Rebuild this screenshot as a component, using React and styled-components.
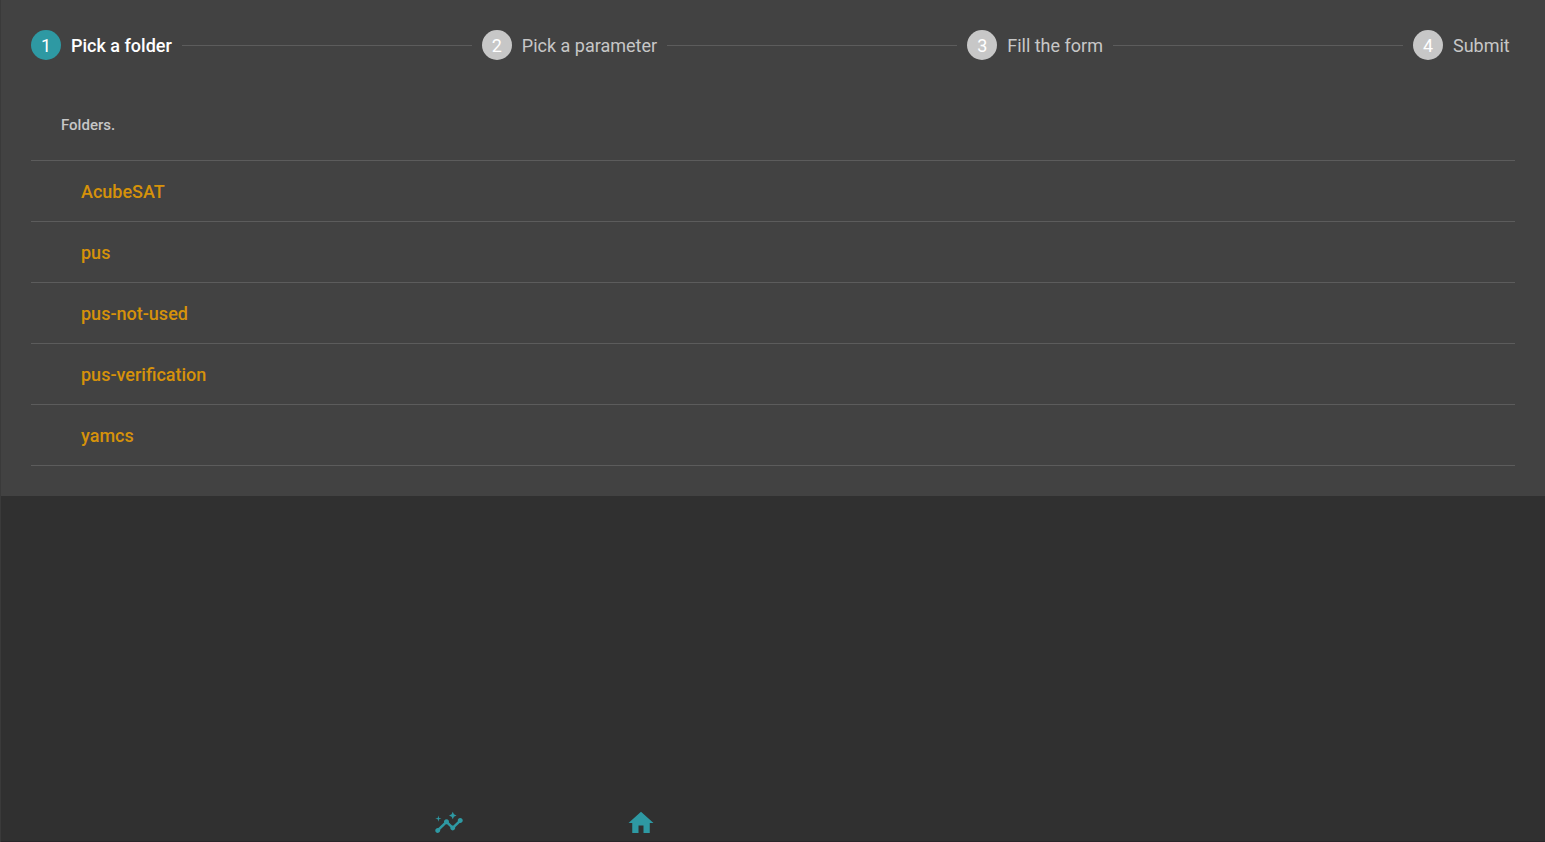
import React, { useState } from "react";
import styled, { createGlobalStyle } from "styled-components";
import { MdHome, MdInsights } from "react-icons/md";

const GlobalStyle = createGlobalStyle`
  *, *::before, *::after { box-sizing: border-box; }
  body {
    margin: 0;
    background: #303030;
    color: #c7c7c7;
    font-family: Roboto, "Liberation Sans", sans-serif;
  }
`;

const Page = styled.div`
  display: flex;
  flex-direction: column;
  min-height: 100vh;
  border-left: 1px solid #3a3a3a;
`;

const Card = styled.main`
  padding: 30px;
  background: #424242;
`;

const Stepper = styled.ol`
  display: flex;
  align-items: center;
  gap: 10px;
  margin: 0;
  padding: 0;
  list-style: none;
`;

const Step = styled.li`
  display: flex;
  align-items: center;
  gap: 10px;
  flex: ${({ $last }) => ($last ? "none" : "1 1 auto")};
  min-width: ${({ $last }) => ($last ? "102px" : "auto")};

  &:not(:last-child)::after {
    content: "";
    flex: 1;
    border-top: 1px solid #5c5c5c;
  }
`;

const StepNumber = styled.span`
  width: 30px;
  height: 30px;
  padding-top: 2px;
  border-radius: 50%;
  background: ${({ $active }) => ($active ? "#2e99a3" : "#c7c7c7")};
  color: #ffffff;
  font-size: 18px;
  line-height: 28px;
  text-align: center;
`;

const StepLabel = styled.span`
  padding-top: 2px;
  color: ${({ $active }) => ($active ? "#ffffff" : "#c7c7c7")};
  font-size: 18px;
  font-weight: ${({ $active }) => ($active ? 500 : 400)};
  line-height: 28px;
`;

const FolderTable = styled.table`
  width: 100%;
  margin-top: 30px;
  border-spacing: 0;
`;

const HeaderCell = styled.th`
  height: 71px;
  padding: 0 30px;
  border-bottom: 1px solid #5c5c5c;
  font-size: 15px;
  font-weight: 500;
  line-height: 20px;
  text-align: left;
`;

const FolderCell = styled.td`
  height: 61px;
  padding: 0 50px;
  border-bottom: 1px solid #5c5c5c;
`;

const FolderButton = styled.button`
  display: block;
  padding: 2px 0 0;
  border: 0;
  background: none;
  color: #d6920a;
  font: 500 18px/28px Roboto, "Liberation Sans", sans-serif;
  cursor: pointer;
`;

const BottomNav = styled.nav`
  display: flex;
  margin-top: auto;
  padding: 4px 0 3px 352px;
  border-bottom: 1px solid #2a262a;
`;

const NavLink = styled.a`
  display: flex;
  justify-content: center;
  width: 192px;
  color: #2e99a3;
  font-size: 30px;
`;

const steps = ["Pick a folder", "Pick a parameter", "Fill the form", "Submit"];
const folders = ["AcubeSAT", "pus", "pus-not-used", "pus-verification", "yamcs"];

export default function App() {
  const [, setFolder] = useState(null);
  return (
    <>
      <GlobalStyle />
      <Page>
        <Card>
          <Stepper>
            {steps.map((label, i) => (
              <Step key={label} $last={i === steps.length - 1} aria-current={i === 0 ? "step" : undefined}>
                <StepNumber $active={i === 0}>{i + 1}</StepNumber>
                <StepLabel $active={i === 0}>{label}</StepLabel>
              </Step>
            ))}
          </Stepper>
          <FolderTable>
            <thead>
              <tr>
                <HeaderCell scope="col">Folders.</HeaderCell>
              </tr>
            </thead>
            <tbody>
              {folders.map((name) => (
                <tr key={name}>
                  <FolderCell>
                    <FolderButton type="button" onClick={() => setFolder(name)}>{name}</FolderButton>
                  </FolderCell>
                </tr>
              ))}
            </tbody>
          </FolderTable>
        </Card>
        <BottomNav>
          <NavLink href="#insights" aria-label="Insights"><MdInsights /></NavLink>
          <NavLink href="#home" aria-label="Home"><MdHome /></NavLink>
        </BottomNav>
      </Page>
    </>
  );
}
